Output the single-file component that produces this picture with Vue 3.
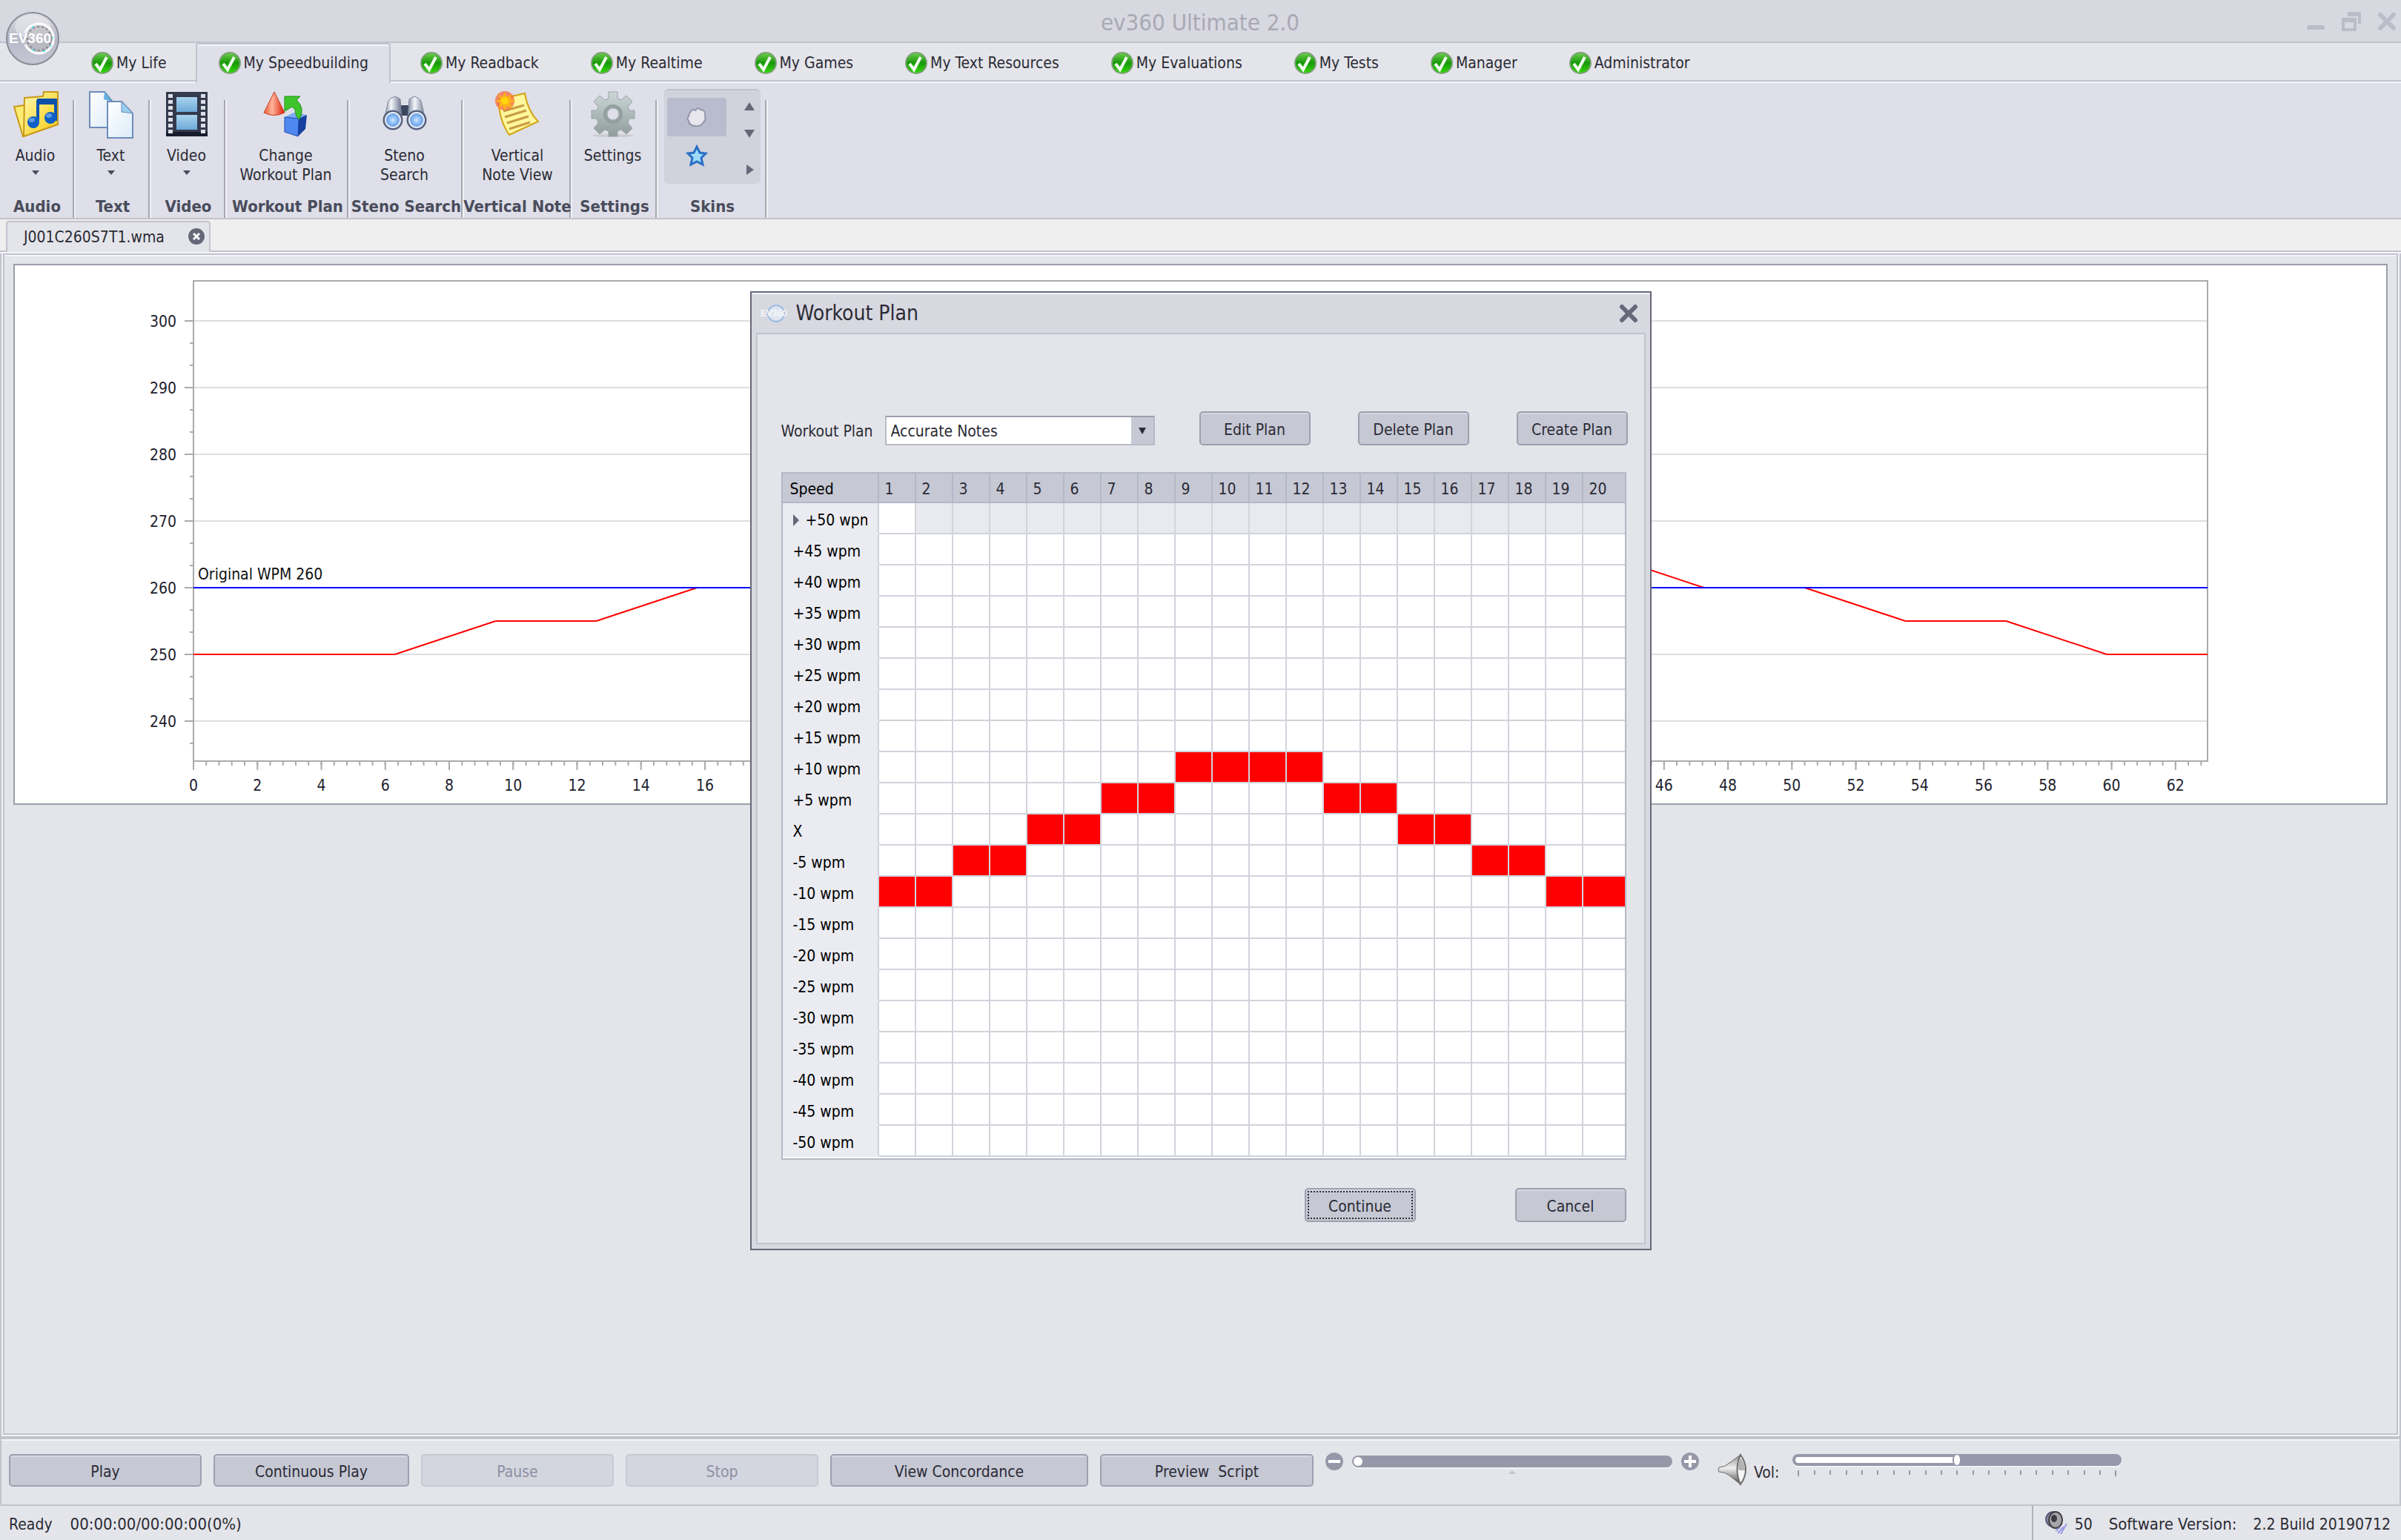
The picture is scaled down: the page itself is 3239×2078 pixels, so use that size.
<script setup>
import { ref, computed } from 'vue'

// Ribbon tabs
const tabs = [
  'My Life',
  'My Speedbuilding',
  'My Readback',
  'My Realtime',
  'My Games',
  'My Text Resources',
  'My Evaluations',
  'My Tests',
  'Manager',
  'Administrator',
]
const activeTab = ref('My Speedbuilding')

// Playback
const position = ref(0)
const volume = ref(50)
const showDialog = ref(true)

// Workout plan: one speed offset for each of the 20 segments
const planName = ref('Accurate Notes')
const plan = ref([-10, -10, -5, -5, 0, 0, 5, 5, 10, 10, 10, 10, 5, 5, 0, 0, -5, -5, -10, -10])

const speeds = []
for (let s = 50; s >= -50; s -= 5) speeds.push(s)

function speedLabel(s) {
  if (s === 0) return 'X'
  return (s > 0 ? '+' : '') + s + ' wpm'
}

function setSpeed(col, s) {
  plan.value[col] = s
}

// Chart scales
const baseWpm = 260
const minutes = 63
const minWpm = 234
const maxWpm = 306

const px = (m) => (m / minutes) * 100 + '%'
const py = (w) => ((maxWpm - w) / (maxWpm - minWpm)) * 100 + '%'

const wpmLabels = [240, 250, 260, 270, 280, 290, 300]
const minuteLabels = Array.from({ length: 32 }, (_, i) => i * 2)
const minorMinutes = Array.from({ length: 158 }, (_, i) => i * 0.4).filter((m) => m < minutes)
const minorWpm = Array.from({ length: 20 }, (_, i) => 240 + ((i - 1) * 10) / 3)

// Red line, drawn segment by segment
const segments = computed(() => {
  const points = [plan.value[0], ...plan.value].map((s, i) => [i * (minutes / 20), baseWpm + s])
  return points.slice(1).map((p, i) => [points[i], p])
})
</script>

<template>
  <div class="app">
    <svg class="defs" width="0" height="0" aria-hidden="true">
      <defs>
        <linearGradient id="gGreen" x1="0" y1="0" x2="0" y2="1">
          <stop offset="0" stop-color="#6fce4d" />
          <stop offset=".5" stop-color="#17980a" />
          <stop offset="1" stop-color="#35d90a" />
        </linearGradient>
        <linearGradient id="gOrb" x1="0" y1="0" x2="0" y2="1">
          <stop offset="0" stop-color="#dcdde3" />
          <stop offset=".5" stop-color="#b9bac8" />
          <stop offset="1" stop-color="#c6c7d3" />
        </linearGradient>
        <linearGradient id="gYellow" x1="0" y1="0" x2="1" y2="1">
          <stop offset="0" stop-color="#fff9b0" />
          <stop offset="1" stop-color="#f7c808" />
        </linearGradient>
        <linearGradient id="gPaper" x1="0" y1="0" x2="1" y2="1">
          <stop offset="0" stop-color="#ffffff" />
          <stop offset="1" stop-color="#dcecf8" />
        </linearGradient>
        <linearGradient id="gFilm" x1="0" y1="0" x2="0" y2="1">
          <stop offset="0" stop-color="#a9d3ee" />
          <stop offset="1" stop-color="#6ea9d8" />
        </linearGradient>
        <linearGradient id="gCone" x1="0" y1="0" x2="1" y2="0">
          <stop offset="0" stop-color="#ee5a34" />
          <stop offset=".4" stop-color="#ffb49a" />
          <stop offset="1" stop-color="#dd1c06" />
        </linearGradient>
        <linearGradient id="gTube" x1="0" y1="0" x2="1" y2="0">
          <stop offset="0" stop-color="#7d879b" />
          <stop offset=".4" stop-color="#f4f6fa" />
          <stop offset="1" stop-color="#66718a" />
        </linearGradient>
        <radialGradient id="gLens">
          <stop offset="0" stop-color="#c9e6ff" />
          <stop offset="1" stop-color="#3f83e2" />
        </radialGradient>
        <linearGradient id="gGear" x1="0" y1="0" x2="0" y2="1">
          <stop offset="0" stop-color="#ccd6d6" />
          <stop offset="1" stop-color="#8f9c9c" />
        </linearGradient>
        <linearGradient id="gHorn" x1="0" y1="0" x2="0" y2="1">
          <stop offset="0" stop-color="#8c8c8c" />
          <stop offset=".45" stop-color="#efefef" />
          <stop offset="1" stop-color="#4a4a4a" />
        </linearGradient>
      </defs>
    </svg>

    <!-- Title bar -->
    <header class="titlebar">
      <h1>ev360 Ultimate 2.0</h1>
      <div class="window-buttons">
        <button aria-label="Minimize">
          <svg width="26" height="26" viewBox="0 0 26 26"><rect x="1" y="18" width="24" height="6" rx="2" fill="#bcbcc8" /></svg>
        </button>
        <button aria-label="Restore">
          <svg width="26" height="26" viewBox="0 0 26 26" fill="#bcbcc8">
            <path d="M8 0h18v16h-4V6H8z" />
            <path fill-rule="evenodd" d="M0 8h20v18H0zm4 6v8h12v-8z" />
          </svg>
        </button>
        <button aria-label="Close">
          <svg width="26" height="26" viewBox="0 0 26 26"><path d="M4 4l18 18M22 4L4 22" stroke="#bcbcc8" stroke-width="6" stroke-linecap="round" /></svg>
        </button>
      </div>
      <button class="orb" aria-label="Application menu">
        <svg width="72" height="72" viewBox="0 0 72 72">
          <circle cx="36" cy="36" r="35" fill="url(#gOrb)" stroke="#8b8c98" stroke-width="2" />
          <ellipse cx="36" cy="20" rx="24" ry="16" fill="#e9eaee" opacity=".6" />
          <circle cx="45" cy="36" r="18" fill="#b5b6ba" opacity=".6" />
          <path d="M26 28a20 20 0 1 1 0 16" fill="none" stroke="#fff" stroke-width="3" />
          <circle cx="45" cy="36" r="16" fill="none" stroke="#85868a" stroke-width="2" stroke-dasharray="3 3" />
          <path d="M35 20l2 1M62 35h2M60 45l1 2M50 53h3M36 51l2 1" stroke="#3fe6ee" stroke-width="2" />
          <text x="4" y="42" class="orb-text">EV360</text>
        </svg>
      </button>
    </header>

    <nav class="tabs">
      <a
        v-for="tab in tabs"
        :key="tab"
        href="#"
        :class="['tab', { selected: tab === activeTab }]"
        @click.prevent="activeTab = tab"
      >
        <svg width="32" height="32" viewBox="0 0 32 32">
          <circle cx="16" cy="16" r="14" fill="url(#gGreen)" stroke="#7fa07a" stroke-width="2" />
          <path d="M7 17l6 8L22 8" fill="none" stroke="#f2faf0" stroke-width="4" />
        </svg>
        {{ tab }}
      </a>
    </nav>

    <!-- Ribbon -->
    <div class="ribbon">
      <section class="group g-small">
        <button class="big">
          <svg width="64" height="64" viewBox="0 0 64 64">
            <path d="M3 22l14-2 3 40-5 2z" fill="#fdeb72" stroke="#c9991a" stroke-width="2" />
            <path d="M17 10l25-2 1-6h19v44L16 62z" fill="url(#gYellow)" stroke="#c9991a" stroke-width="2" />
            <path d="M35 13h24v28M35 13v28" fill="none" stroke="#0c55b5" stroke-width="4" />
            <path d="M34 11h26v8H34z" fill="#0c4fa8" />
            <ellipse cx="29" cy="43" rx="8" ry="8" fill="#0f5fc6" />
            <ellipse cx="52" cy="37" rx="8" ry="8" fill="#0f5fc6" />
            <ellipse cx="27" cy="40" rx="4" ry="3" fill="#5d9ae2" />
            <ellipse cx="50" cy="34" rx="4" ry="3" fill="#5d9ae2" />
          </svg>
          <span>Audio</span>
          <i class="caret"></i>
        </button>
        <h2>Audio</h2>
      </section>
      <section class="group g-small">
        <button class="big">
          <svg width="64" height="64" viewBox="0 0 64 64">
            <path d="M3 2h20l10 12v36H3z" fill="url(#gPaper)" stroke="#6d8cbb" stroke-width="2" />
            <path d="M23 2l10 13-11-3z" fill="#63b0e0" />
            <path d="M27 15h19l15 16v33H27z" fill="url(#gPaper)" stroke="#6d8cbb" stroke-width="2" />
            <path d="M46 15l15 16-15-2z" fill="#9bcfee" stroke="#6d8cbb" stroke-width="1" />
          </svg>
          <span>Text</span>
          <i class="caret"></i>
        </button>
        <h2>Text</h2>
      </section>
      <section class="group g-small">
        <button class="big">
          <svg width="64" height="64" viewBox="0 0 64 64">
            <rect x="4" y="2" width="56" height="60" fill="#333b4d" />
            <rect x="4" y="56" width="56" height="6" fill="#171d2c" />
            <rect x="18" y="9" width="28" height="20" fill="url(#gFilm)" />
            <rect x="18" y="33" width="28" height="20" fill="url(#gFilm)" />
            <g fill="#dedfe8">
              <rect v-for="n in 7" :key="'l' + n" x="7" :y="n * 8 - 3" width="6" height="5" />
              <rect v-for="n in 7" :key="'r' + n" x="51" :y="n * 8 - 3" width="6" height="5" />
            </g>
          </svg>
          <span>Video</span>
          <i class="caret"></i>
        </button>
        <h2>Video</h2>
      </section>
      <section class="group g-plan">
        <button class="big" @click="showDialog = true">
          <svg width="64" height="64" viewBox="0 0 64 64">
            <path d="M16 2L2 30q14 7 28 0z" fill="url(#gCone)" stroke="#c83a1e" stroke-width="1" />
            <path d="M30 36l12-6 18 3-11 5z" fill="#7fa9f5" />
            <path d="M30 36l19 2-1 24-18-6z" fill="#4f88ee" stroke="#1c49b4" stroke-width="1" />
            <path d="M49 38l11-5-2 19-10 10z" fill="#173f9f" />
            <path d="M30 8h21l-5 5q12 11 4 26-5-2-6-13l-4-4-10 6z" fill="#3fc52c" stroke="#1e8f14" stroke-width="1" />
          </svg>
          <span>Change<br />Workout Plan</span>
        </button>
        <h2>Workout Plan</h2>
      </section>
      <section class="group g-search">
        <button class="big">
          <svg width="64" height="64" viewBox="0 0 64 64">
            <rect x="26" y="20" width="12" height="14" rx="2" fill="#3b465f" />
            <path d="M10 14q8-10 16-2l2 28H4z" fill="url(#gTube)" stroke="#7d879b" />
            <path d="M54 14q-8-10-16-2l-2 28h24z" fill="url(#gTube)" stroke="#7d879b" />
            <circle cx="16" cy="40" r="12" fill="url(#gLens)" stroke="#55617b" stroke-width="3" />
            <circle cx="48" cy="40" r="12" fill="url(#gLens)" stroke="#55617b" stroke-width="3" />
            <circle cx="16" cy="40" r="10" fill="none" stroke="#e9eef6" stroke-width="2" />
            <circle cx="48" cy="40" r="10" fill="none" stroke="#e9eef6" stroke-width="2" />
          </svg>
          <span>Steno<br />Search</span>
        </button>
        <h2>Steno Search</h2>
      </section>
      <section class="group g-note">
        <button class="big">
          <svg width="64" height="64" viewBox="0 0 64 64">
            <path d="M6 12l36-8q4 24 18 38L21 60Q8 42 6 12z" fill="#fff79c" stroke="#d0a212" stroke-width="2" />
            <path d="M13 28l28-8M15 36l29-9M18 44l29-9M21 52l28-9" stroke="#c79c44" stroke-width="3" />
            <circle cx="15" cy="14" r="13" fill="#f66a3c" opacity=".75" />
            <path d="M15 2l3 7 6-4-2 7 7 2-7 3 3 7-7-3-3 6-3-6-6 3 3-7-7-3 7-2-3-7 6 4z" fill="#ffb01a" />
            <circle cx="15" cy="14" r="5" fill="#ffd60a" />
          </svg>
          <span>Vertical<br />Note View</span>
        </button>
        <h2>Vertical Note</h2>
      </section>
      <section class="group g-settings">
        <button class="big">
          <svg width="64" height="64" viewBox="0 0 64 64">
            <ellipse cx="32" cy="61" rx="28" ry="2" fill="#c9cad0" />
            <g fill="url(#gGear)" stroke="#98a5a5" stroke-width="1">
              <path
                fill-rule="evenodd"
                d="M26 2h12v9l5 2 7-6 8 8-6 7 2 5h7v11h-7l-2 6 6 7-8 8-7-6-5 2v7H26v-7l-5-2-7 6-8-8 6-7-2-6H3V27h7l2-5-6-7 8-8 7 6 5-2zM32 24a8 8 0 1 0 0 16a8 8 0 1 0 0-16z"
              />
            </g>
            <circle cx="32" cy="32" r="11" fill="none" stroke="#939f9f" stroke-width="4" />
          </svg>
          <span>Settings</span>
        </button>
        <h2>Settings</h2>
      </section>
      <section class="group g-skins">
        <div class="gallery">
          <div class="skins">
            <button class="skin picked" aria-label="Pearl skin">
              <svg width="28" height="28" viewBox="0 0 28 28">
                <path d="M5 8q3-6 7-3 3-5 7-1 7 0 6 8 2 5-2 9-4 6-11 5-8 0-9-7-3-3 0-6 0-3 2-5z" fill="#e6e6ec" stroke="#9496ad" stroke-width="2" />
              </svg>
            </button>
            <button class="skin" aria-label="Star skin">
              <svg width="28" height="28" viewBox="0 0 28 28">
                <path d="M14 2l4 8 8 1-6 6 2 9-8-4-8 4 2-9-6-6 8-1z" fill="#9fdcfa" stroke="#2a6fc4" stroke-width="3" />
              </svg>
            </button>
          </div>
          <div class="scroll">
            <button aria-label="Previous skins"><svg width="14" height="12"><path d="M0 11L7 0l7 11z" fill="#666879" /></svg></button>
            <button aria-label="Next skins"><svg width="14" height="12"><path d="M0 1h14L7 12z" fill="#666879" /></svg></button>
            <button class="more" aria-label="All skins"><svg width="14" height="14"><path d="M3 0l10 7L3 14z" fill="#666879" /></svg></button>
          </div>
        </div>
        <h2>Skins</h2>
      </section>
    </div>

    <!-- Open documents -->
    <div class="doc-tabs">
      <div class="doc-tab">
        <span>J001C260S7T1.wma</span>
        <button aria-label="Close document">
          <svg width="22" height="22" viewBox="0 0 22 22">
            <circle cx="11" cy="11" r="11" fill="#666879" />
            <path d="M7 7l8 8M15 7l-8 8" stroke="#fff" stroke-width="3" />
          </svg>
        </button>
      </div>
    </div>

    <main class="frame">
      <div class="workspace">
        <div class="chart">
          <svg width="100%" height="648">
            <g class="grid">
              <line v-for="w in wpmLabels" :key="w" x1="0" x2="100%" :y1="py(w)" :y2="py(w)" />
            </g>
            <g class="axis">
              <rect x="0" y="0" width="100%" height="100%" />
              <line v-for="w in wpmLabels" :key="'a' + w" x1="-12" x2="0" :y1="py(w)" :y2="py(w)" />
              <line v-for="w in minorWpm" :key="'b' + w" x1="-5" x2="0" :y1="py(w)" :y2="py(w)" />
              <line v-for="m in minuteLabels" :key="'c' + m" :x1="px(m)" :x2="px(m)" y1="648" y2="660" />
              <line v-for="m in minorMinutes" :key="'d' + m" :x1="px(m)" :x2="px(m)" y1="648" y2="654" />
            </g>
            <text v-for="w in wpmLabels" :key="'e' + w" x="-23" :y="py(w)" dy="8" text-anchor="end">{{ w }}</text>
            <text v-for="m in minuteLabels" :key="'f' + m" :x="px(m)" y="688" text-anchor="middle">{{ m }}</text>
            <line
              v-for="(s, i) in segments"
              :key="'g' + i"
              class="speed"
              :x1="px(s[0][0])"
              :y1="py(s[0][1])"
              :x2="px(s[1][0])"
              :y2="py(s[1][1])"
            />
            <line class="original" x1="0" x2="100%" :y1="py(baseWpm)" :y2="py(baseWpm)" />
            <text x="6" :y="py(baseWpm)" dy="-11" class="black">Original WPM {{ baseWpm }}</text>
          </svg>
        </div>
      </div>
    </main>

    <!-- Playback controls -->
    <div class="player">
      <button class="btn w-play">Play</button>
      <button class="btn w-cont">Continuous Play</button>
      <button class="btn w-play" disabled>Pause</button>
      <button class="btn w-play" disabled>Stop</button>
      <button class="btn w-view">View Concordance</button>
      <button class="btn w-preview">Preview&nbsp; Script</button>
      <div class="seek">
        <button aria-label="Slower">
          <svg width="24" height="24" viewBox="0 0 24 24"><circle cx="12" cy="12" r="12" fill="#9698a9" /><path d="M4 12h16" stroke="#fff" stroke-width="4" /></svg>
        </button>
        <div class="seek-track">
          <input v-model="position" type="range" min="0" max="100" aria-label="Position" />
          <i class="mark"></i>
        </div>
        <button aria-label="Faster">
          <svg width="24" height="24" viewBox="0 0 24 24"><circle cx="12" cy="12" r="12" fill="#9698a9" /><path d="M4 12h16M12 4v16" stroke="#fff" stroke-width="4" /></svg>
        </button>
      </div>
      <div class="volume">
        <svg width="40" height="42" viewBox="0 0 40 42">
          <path d="M1 18q8 0 14-6L30 1v40L15 29q-6-5-14-5-2-3 0-6z" fill="url(#gHorn)" stroke="#6a6a6a" stroke-width="1" />
          <path d="M30 1q14 20 0 40-9-20 0-40z" fill="#f4f4f4" stroke="#6f6f6f" stroke-width="2" />
          <path d="M30 5q-6 15-1 17h7q0-9-6-17z" fill="#b4b4b4" />
        </svg>
        <label for="volume">Vol:</label>
        <div class="vol-track">
          <input
            id="volume"
            v-model="volume"
            type="range"
            min="0"
            max="100"
            :style="{ '--level': volume + '%' }"
          />
          <div class="ticks"><i v-for="n in 21" :key="n"></i></div>
        </div>
      </div>
    </div>

    <footer class="status">
      <span>Ready</span>
      <span class="wide">00:00:00/00:00:00(0%)</span>
      <div class="version">
        <svg width="32" height="32" viewBox="0 0 32 32">
          <ellipse cx="11" cy="11" rx="10" ry="10" fill="#8a8a90" stroke="#5c5c84" stroke-width="2" />
          <ellipse cx="14" cy="12" rx="9" ry="11" fill="#a5a5a8" stroke="#3c3c40" stroke-width="2" />
          <ellipse cx="12" cy="10" rx="4" ry="5" fill="#3c3c44" />
          <path d="M14 27l6-5M17 30l8-9M21 31l8-14" stroke="#9a9aea" stroke-width="2" />
        </svg>
        <span class="level">{{ volume }}</span>
        <span class="wide">Software Version:</span>
        <span>2.2 Build 20190712</span>
      </div>
    </footer>

    <!-- Workout plan dialog -->
    <div v-if="showDialog" class="overlay">
      <div class="dialog" role="dialog" aria-label="Workout Plan">
        <header>
          <svg width="34" height="28" viewBox="0 0 34 28">
            <circle cx="21" cy="14" r="11" fill="#dfe5ee" stroke="#9dbbe0" stroke-width="2" />
            <text x="0" y="18" class="mini-text">EV360</text>
          </svg>
          <h2>Workout Plan</h2>
          <button aria-label="Close dialog" @click="showDialog = false">
            <svg width="26" height="26" viewBox="0 0 26 26"><path d="M4 4l18 18M22 4L4 22" stroke="#666879" stroke-width="6" stroke-linecap="round" /></svg>
          </button>
        </header>
        <div class="body">
          <div class="plan-bar">
            <label for="plan">Workout Plan</label>
            <div class="combo">
              <select id="plan" v-model="planName">
                <option>Accurate Notes</option>
              </select>
              <span class="drop"><svg width="10" height="10"><path d="M0 1h10L5 10z" fill="#2b2b35" /></svg></span>
            </div>
            <div class="plan-buttons">
              <button class="btn">Edit Plan</button>
              <button class="btn">Delete Plan</button>
              <button class="btn">Create Plan</button>
            </div>
          </div>

          <div class="grid-box">
            <table>
              <thead>
                <tr>
                  <th class="speed-col">Speed</th>
                  <th v-for="n in 20" :key="n">{{ n }}</th>
                </tr>
              </thead>
              <tbody>
                <tr v-for="(s, r) in speeds" :key="s" :class="{ current: r === 0 }">
                  <th>
                    <div class="row-label">
                      <svg v-if="r === 0" width="8" height="16"><path d="M0 0l8 8-8 8z" fill="#666879" /></svg>
                      {{ speedLabel(s) }}
                    </div>
                  </th>
                  <td
                    v-for="(p, c) in plan"
                    :key="c"
                    :class="{ on: p === s }"
                    @click="setSpeed(c, s)"
                  ></td>
                </tr>
              </tbody>
            </table>
          </div>

          <div class="actions">
            <button class="btn default" @click="showDialog = false">Continue</button>
            <button class="btn" @click="showDialog = false">Cancel</button>
          </div>
        </div>
      </div>
    </div>
  </div>
</template>

<style>
body {
  margin: 0;
}
</style>

<style scoped>
.app {
  display: flex;
  flex-direction: column;
  min-height: 100vh;
  background: #e4e5ea;
  color: #2b2b35;
  font-family: 'DejaVu Sans Condensed', 'Noto Sans', sans-serif;
  font-size: 21px;
  line-height: 26px;
}

* {
  box-sizing: border-box;
}

.defs {
  position: absolute;
}

h1,
h2 {
  margin: 0;
}

button {
  padding: 0;
  border: 0;
  background: none;
  color: inherit;
  font: inherit;
}

svg {
  display: block;
  flex: none;
  overflow: visible;
}

/* Title bar */
.titlebar {
  position: relative;
  display: flex;
  align-items: center;
  height: 58px;
  padding-top: 2px;
  background: #d8d8e1;
  border-bottom: 2px solid #c2c2cf;
}

.titlebar h1 {
  flex: 1;
  padding-left: 127px;
  padding-top: 2px;
  color: #a9a9b3;
  font-size: 31px;
  font-weight: normal;
  line-height: 36px;
  text-align: center;
}

.window-buttons {
  display: flex;
  gap: 22px;
  padding-right: 6px;
}

.orb {
  position: absolute;
  top: 16px;
  left: 8px;
}

.orb-text {
  fill: #fff;
  font: bold 19px 'Liberation Sans', sans-serif;
}

/* Ribbon tabs */
.tabs {
  display: flex;
  gap: 9px;
  height: 54px;
  padding-left: 92px;
  border-bottom: 2px solid #f4f5f9;
  box-shadow: inset 0 -2px #c2c3cc;
}

.tab {
  display: flex;
  align-items: center;
  gap: 3px;
  height: 54px;
  padding: 0 28px 2px;
  border: 2px solid transparent;
  border-bottom: 0;
  color: inherit;
  text-decoration: none;
}

.tab.selected {
  background: #dedfe8;
  border-color: #c2c3cc;
  border-radius: 4px 4px 0 0;
  box-shadow: inset 0 2px #f4f5f9;
}

/* Ribbon */
.ribbon {
  display: flex;
  height: 184px;
  background: #dedfe8;
  border-bottom: 2px solid #c2c3cc;
}

.group {
  display: flex;
  flex-direction: column;
  align-items: center;
  justify-content: space-between;
  padding: 10px 2px 0 0;
  background: linear-gradient(#a8a8b0, #a8a8b0) right 2px bottom / 2px 159px no-repeat,
    linear-gradient(#f0f0f5, #f0f0f5) right bottom / 2px 159px no-repeat;
}

.group h2 {
  color: #4a4c5c;
  font-size: 22px;
  line-height: 30px;
  white-space: nowrap;
}

.g-small {
  width: 102px;
}

.g-plan {
  width: 166px;
}

.g-search {
  width: 154px;
}

.g-note {
  width: 146px;
}

.g-settings {
  width: 116px;
}

.g-skins {
  width: 148px;
}

.big {
  display: flex;
  flex-direction: column;
  align-items: center;
  padding-right: 5px;
}

.g-note .big {
  padding-right: 0;
}

.big span {
  margin-top: 11px;
}

.caret {
  margin-top: 7px;
  border: 5px solid transparent;
  border-top: 6px solid #4a4c5c;
  border-bottom: 0;
}

.gallery {
  display: flex;
  justify-content: space-between;
  width: 130px;
  height: 128px;
  margin-top: -2px;
  padding: 10px 8px 10px 4px;
  background: #d0d2dc;
  border-top: 2px solid #c2c3cc;
  border-radius: 6px;
}

.skin {
  display: grid;
  place-items: center;
  width: 80px;
  height: 52px;
  border-radius: 3px;
}

.skin.picked {
  background: #b9bccd;
}

.scroll {
  display: flex;
  flex-direction: column;
  gap: 24px;
  padding-top: 6px;
}

.scroll .more {
  margin-top: 12px;
}

/* Document tabs */
.doc-tabs {
  display: flex;
  align-items: flex-end;
  height: 46px;
  padding-left: 8px;
  background: #efefef;
  border-bottom: 2px solid #f4f5f9;
  box-shadow: inset 0 -2px #c2c3cc;
}

.doc-tab {
  display: flex;
  align-items: center;
  justify-content: space-between;
  width: 276px;
  height: 42px;
  padding: 0 6px 2px 22px;
  background: #e4e5ea;
  border: 2px solid #c2c3cc;
  border-bottom: 0;
  border-radius: 4px 4px 0 0;
}

.doc-tab span {
  padding-top: 2px;
}

/* Workspace */
.frame {
  display: flex;
  flex: 1;
  padding: 0 2px 2px;
  background: #f0f1f5;
  border: 2px solid #c2c3cc;
  border-top: 0;
}

.workspace {
  flex: 1;
  padding: 12px 12px 0 12px;
  background: #e4e5ea;
  border: 2px solid #c2c3cc;
  box-shadow: inset 0 2px #f4f5f9;
}

.chart {
  padding: 21px 241px 57px;
  background: #fff;
  border: 2px solid #9c9eab;
}

.chart text {
  fill: #22222e;
}

.chart .black {
  fill: #111;
}

.grid line {
  stroke: #dedede;
  stroke-width: 2;
}

.axis {
  fill: none;
  stroke: #ababab;
  stroke-width: 2;
}

.speed {
  stroke: #f00;
  stroke-width: 2;
}

.original {
  stroke: #00f;
  stroke-width: 2;
}

/* Buttons */
.btn {
  width: 150px;
  height: 46px;
  padding-top: 3px;
  background: #c6c8d4;
  border: 2px solid #9ca1b0;
  border-radius: 5px;
  box-shadow: inset 0 2px #d6d7e0;
}

.btn:disabled {
  background: #d4d6df;
  border-color: #c6c8d4;
  box-shadow: none;
  color: #8d90a3;
}

/* Player */
.player {
  display: flex;
  gap: 16px;
  height: 92px;
  padding: 20px 10px 0 10px;
  border: 2px solid #c2c3cc;
  box-shadow: inset 0 2px #f4f5f9;
}

.player .btn {
  height: 44px;
}

.player .w-play {
  width: 260px;
}

.player .w-cont {
  width: 264px;
}

.player .w-view {
  width: 348px;
}

.player .w-preview {
  width: 288px;
}

.seek {
  display: flex;
  align-items: flex-start;
  gap: 12px;
  margin-top: -2px;
}

.seek-track {
  display: flex;
  flex-direction: column;
  align-items: center;
  gap: 4px;
  width: 432px;
  padding-top: 4px;
}

.mark {
  border: 5px solid transparent;
  border-top: 0;
  border-bottom: 5px solid #c2c3cf;
}

input[type='range'] {
  width: 100%;
  height: 16px;
  margin: 0;
  padding: 0 2px;
  appearance: none;
  background: #9698a9;
  border-radius: 8px;
  box-shadow: 0 2px #f0f1f5;
}

input[type='range']::-webkit-slider-thumb {
  width: 12px;
  height: 12px;
  appearance: none;
  background: #fff;
  border-radius: 6px;
}

.volume {
  display: flex;
  align-items: flex-start;
  margin-left: 10px;
}

.volume label {
  margin: 12px 18px 0 8px;
}

.vol-track {
  width: 444px;
}

#volume {
  display: block;
  padding: 0 4px;
}

#volume::-webkit-slider-runnable-track {
  height: 8px;
  background: linear-gradient(#fff, #fff) left / var(--level) 100% no-repeat;
  border-radius: 4px;
}

#volume::-webkit-slider-thumb {
  height: 14px;
  margin-top: -3px;
  border: 2px solid #9698a9;
  border-width: 0 2px;
}

.ticks {
  display: flex;
  justify-content: space-between;
  padding: 6px 7px 0;
}

.ticks i {
  width: 2px;
  height: 6px;
  background: #9698a9;
}

.ticks i:first-child,
.ticks i:last-child {
  height: 8px;
}

/* Status bar */
.status {
  display: flex;
  align-items: center;
  gap: 24px;
  height: 46px;
  padding: 0 14px 0 12px;
}

.status span {
  padding-top: 3px;
}

.wide {
  font-size: 22px;
}

.version {
  display: flex;
  align-items: center;
  gap: 22px;
  height: 46px;
  margin-left: auto;
  padding-left: 16px;
  border-left: 2px solid #b2b3bd;
}

.version .level {
  margin-left: -14px;
}

/* Dialog */
.overlay {
  position: fixed;
  inset: 0;
  display: grid;
  place-items: center;
  padding-top: 2px;
}

.dialog {
  width: 1216px;
  background: #d8d8e1;
  border: 2px solid #666879;
  box-shadow: inset 0 2px #f4f5f9;
}

.dialog header {
  display: flex;
  align-items: center;
  gap: 14px;
  height: 54px;
  padding: 2px 16px 0 12px;
}

.dialog header h2 {
  flex: 1;
  font-size: 28px;
  font-weight: normal;
}

.mini-text {
  fill: #f5f7fa;
  font: bold 12px 'Liberation Sans', sans-serif;
}

.body {
  margin: 0 6px 6px;
  padding: 104px 22px 28px 32px;
  background: #e4e5ea;
  border: 2px solid #c2c3cf;
}

.plan-bar {
  display: flex;
  align-items: flex-end;
  justify-content: space-between;
}

.plan-bar label {
  width: 128px;
  padding-bottom: 6px;
  white-space: nowrap;
}

.combo {
  position: relative;
  width: 364px;
}

.combo select {
  display: block;
  width: 100%;
  height: 40px;
  padding: 2px 6px 0;
  appearance: none;
  background: #fff;
  border: 2px solid #b9bbc9;
  border-top-color: #9c9eab;
  border-radius: 0;
  color: inherit;
  font: inherit;
}

.drop {
  position: absolute;
  top: 2px;
  right: 2px;
  bottom: 2px;
  display: grid;
  place-items: center;
  width: 30px;
  background: #c6c8d4;
  pointer-events: none;
}

.plan-buttons {
  display: flex;
  gap: 64px;
  margin-left: 48px;
}

.grid-box {
  width: 1140px;
  margin-top: 36px;
  padding-bottom: 2px;
  background: #fff;
  border: 2px solid #b4b8c6;
}

table {
  width: 100%;
  border-spacing: 0;
  table-layout: fixed;
}

th,
td {
  height: 42px;
  padding: 0;
  border: 0 solid #d2d3dc;
  border-width: 0 2px 2px 0;
  font-weight: normal;
  text-align: left;
}

th:last-child,
td:last-child {
  border-right: 0;
}

thead th {
  width: 50px;
  height: 40px;
  padding: 3px 0 0 8px;
  background: #c6c8d4;
  border-color: #b4b8c6;
}

thead th:last-child {
  width: auto;
}

thead .speed-col {
  width: 130px;
  padding-left: 10px;
  color: #000;
}

tbody th {
  padding-top: 6px;
  background: #ebecf2;
  border-bottom-color: #ebecf2;
  color: #000;
}

.row-label {
  display: flex;
  align-items: center;
  gap: 9px;
  width: 114px;
  padding-left: 14px;
  overflow: hidden;
  white-space: nowrap;
}

.current td {
  background: #e9eaf0;
}

.current th + td {
  background: #fff;
}

td.on {
  background: #f00;
  background-clip: padding-box;
}

.actions {
  display: flex;
  justify-content: flex-end;
  gap: 134px;
  margin-top: 38px;
  padding-right: 2px;
}

.default {
  outline: 2px dotted #2b2b35;
  outline-offset: -6px;
}
</style>
